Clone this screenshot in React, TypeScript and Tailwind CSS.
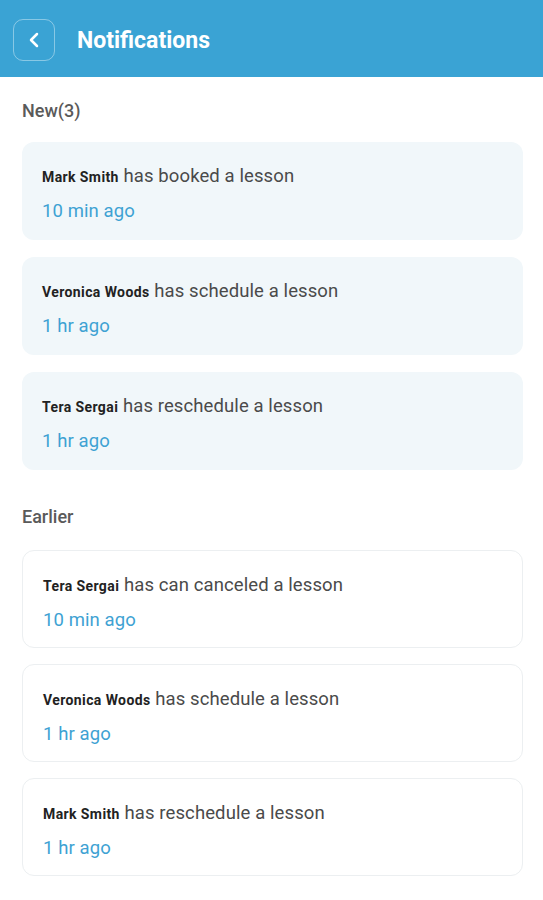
import { ChevronLeft } from "lucide-react";

type Item = { name: string; action: string; time: string };

const nuevos: Item[] = [
  { name: "Mark Smith", action: "has booked a lesson", time: "10 min ago" },
  { name: "Veronica Woods", action: "has schedule a lesson", time: "1 hr ago" },
  { name: "Tera Sergai", action: "has reschedule a lesson", time: "1 hr ago" },
];

const anteriores: Item[] = [
  { name: "Tera Sergai", action: "has can canceled a lesson", time: "10 min ago" },
  { name: "Veronica Woods", action: "has schedule a lesson", time: "1 hr ago" },
  { name: "Mark Smith", action: "has reschedule a lesson", time: "1 hr ago" },
];

function Card({ item, unread }: { item: Item; unread: boolean }) {
  return (
    <div
      className={`h-[98px] rounded-xl px-5 pt-[22px] ${
        unread ? "bg-[#f1f7fa]" : "bg-white border border-[#eceff1]"
      }`}
    >
      <p className="h-6 leading-6 text-[18.5px] tracking-[0.1px] text-[#4a4a4a]">
        <span className="text-[14px] font-bold tracking-[0.4px] text-[#222]">{item.name}</span> {item.action}
      </p>
      <p className="mt-[11px] h-6 leading-6 text-[18.5px] tracking-[0.1px] text-[#3ea2d3]">{item.time}</p>
    </div>
  );
}

export default function App() {
  return (
    <div className="min-h-[900px] bg-white font-['Roboto',sans-serif]">
      {/* Header */}
      <div className="h-[77px] bg-[#3aa3d4] flex items-center pl-[13px] pt-[2px]">
        <button className="w-[42px] h-[42px] rounded-[10px] border border-white/40 flex items-center justify-center text-white">
          <ChevronLeft size={24} strokeWidth={2.5} />
        </button>
        <h1 className="ml-[22px] mt-[3px] text-[23px] font-bold text-white">Notifications</h1>
      </div>

      <div className="pl-[22px] pr-5">
        <h2 className="mt-[22px] h-6 leading-6 text-[18px] font-medium text-[#5a5a5a]">New(3)</h2>
        <div className="mt-[19px] flex flex-col gap-[17px]">
          {nuevos.map((it, i) => (
            <Card key={i} item={it} unread />
          ))}
        </div>

        <h2 className="mt-[35px] h-6 leading-6 text-[18px] font-medium text-[#5a5a5a]">Earlier</h2>
        <div className="mt-[21px] flex flex-col gap-[16px]">
          {anteriores.map((it, i) => (
            <Card key={i} item={it} unread={false} />
          ))}
        </div>
      </div>
    </div>
  );
}
